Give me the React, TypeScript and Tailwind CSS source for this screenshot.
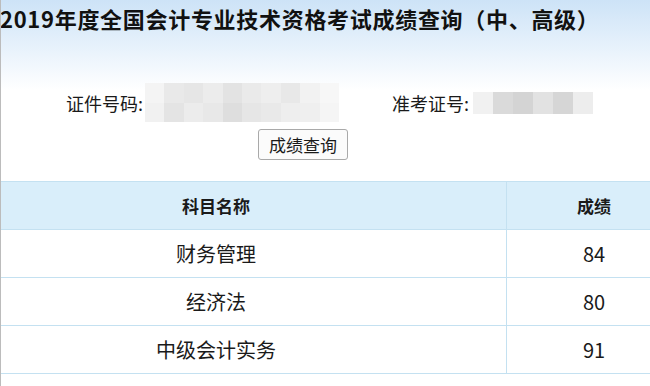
import React from 'react';

const FONT = "font-['Noto_Sans_CJK_SC','Noto_Sans',sans-serif]";

// pixelated blur over the hidden ID numbers
const idBlocks = [
  ['#f4f4f4', '#f1f1f1'],
  ['#e9e9e9', '#e4e4e4'],
  ['#e6e6e6', '#ececec'],
  ['#ececec', '#e8e8e8'],
  ['#e3e3e3', '#dedede'],
  ['#eaeaea', '#e6e6e6'],
  ['#eeeeee', '#e9e9e9'],
  ['#e8e8e8', '#eeeeee'],
  ['#f2f2f2', '#efefef'],
  ['#f7f7f7', '#f5f5f5'],
];

const ticketBlocks = ['#f1f1f1', '#dadada', '#d4d4d4', '#e2e2e2', '#d6d6d6', '#ededed'];

const rows = [
  { name: '财务管理', score: '84' },
  { name: '经济法', score: '80' },
  { name: '中级会计实务', score: '91' },
];

function BlurBox() {
  return (
    <div className="flex w-[194px] h-[39px] ml-[2px]">
      {idBlocks.map((col, i) => (
        <div key={i} className="flex-1 flex flex-col">
          <div className="flex-1" style={{ backgroundColor: col[0] }} />
          <div className="flex-1" style={{ backgroundColor: col[1] }} />
        </div>
      ))}
    </div>
  );
}

export default function App() {
  return (
    <div className={`${FONT} w-[650px] h-[386px] overflow-hidden bg-white border-l border-[#bcbcbc] text-[#1a1a1a]`}>
      <div className="bg-linear-to-b from-[#cde3f7] via-white via-50% to-white h-[181px]">
        <div className="h-[83px] pt-[5px]">
          <h1 className="text-[22px] leading-[26px] font-bold tracking-[0.7px] whitespace-nowrap -ml-[1px] text-[#111]">
            2019年度全国会计专业技术资格考试成绩查询（中、高级）
          </h1>
        </div>

        <div className="flex items-center h-[39px] pl-[65px] text-[18px] leading-[24px]">
          <span className="whitespace-nowrap">证件号码:</span>
          <BlurBox />
          <span className="whitespace-nowrap ml-[53px]">准考证号:</span>
          <div className="flex w-[120px] h-[22px] ml-[4px]">
            {ticketBlocks.map((c, i) => (
              <div key={i} className="flex-1" style={{ backgroundColor: c }} />
            ))}
          </div>
        </div>

        <div className="pl-[257px] pt-[7px]">
          <button className="w-[90px] h-[31px] border border-[#a9a9a9] rounded-[3px] bg-[#fbfbfb] text-[17px] leading-[29px] text-[#1a1a1a]">
            成绩查询
          </button>
        </div>
      </div>

      <div className="border-t border-[#c4e1f1]">
        <div className="flex h-[48px] bg-[#d9eefa] border-b border-[#c4e1f1] text-[17px] font-bold">
          <div className="w-[506px] shrink-0 border-r border-[#c4e1f1] flex items-center justify-center pr-[75px]">
            科目名称
          </div>
          <div className="flex items-center">
            <div className="w-[174px] shrink-0 text-center">成绩</div>
          </div>
        </div>
        {rows.map((r) => (
          <div key={r.name} className="flex h-[48px] border-b border-[#c4e1f1] text-[20px]">
            <div className="w-[506px] shrink-0 border-r border-[#c4e1f1] flex items-center justify-center pr-[75px]">
              {r.name}
            </div>
            <div className="flex items-center">
              <div className="w-[174px] shrink-0 text-center">{r.score}</div>
            </div>
          </div>
        ))}
      </div>
    </div>
  );
}
